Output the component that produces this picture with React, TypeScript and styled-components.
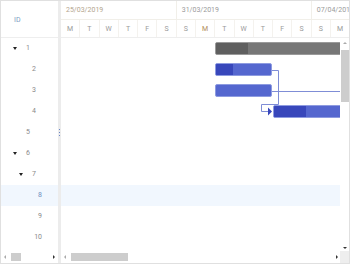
import React from 'react';
import styled, { createGlobalStyle } from 'styled-components';

const GlobalStyle = createGlobalStyle`
    html, body { margin: 0; padding: 0; background: #fff; }
    body { font-family: Roboto, 'Liberation Sans', sans-serif; }
`;

const DAY = 135 / 7;
const ROW = 21;

const Gantt = styled.div`
    width: 350px; height: 264px; box-sizing: border-box;
    border: 1px solid #e0e0e0;
    display: flex; font-size: 7px; color: #8a8a8a;
    overflow: hidden;
`;

const TreePanel = styled.div`
    width: 57px; display: flex; flex-direction: column; flex-shrink: 0;
`;

const TreeHeader = styled.div`
    height: 37px; box-sizing: border-box; border-bottom: 1px solid #eee;
    display: flex; align-items: center; padding-left: 13px; padding-top: 1px;
    color: #7d9cc2;
`;

const Rows = styled.div`
    flex: 1; overflow: hidden; position: relative;
`;

const TreeRow = styled.div<{ $level: number; $selected?: boolean }>`
    height: ${ROW}px; display: flex; align-items: center;
    padding-left: ${p => 12 + p.$level * 6}px;
    background: ${p => (p.$selected ? '#f1f7fe' : 'transparent')};
    color: ${p => (p.$selected ? '#6f8fbf' : '#8a8a8a')};
`;

const Toggle = styled.i`
    width: 5px; height: 6px; display: flex; align-items: center;
    &::before { content: ''; border-left: 2.5px solid transparent; border-right: 2.5px solid transparent; border-top: 3px solid #222; }
`;

const NoToggle = styled.i` width: 5px; `;

const Label = styled.span`
    width: 12px; text-align: right; line-height: 1;
`;

const HScroll = styled.div`
    height: 12px; display: flex; align-items: center; gap: 2px; padding: 0 3px;
    background: #fff; flex-shrink: 0;
`;

const Arrow = styled.i<{ $dir: 'left' | 'right' | 'up' | 'down'; $dark?: boolean }>`
    width: 0; height: 0; flex-shrink: 0;
    ${p => {
        const c = p.$dark ? '#333' : '#aaa';
        switch (p.$dir) {
            case 'left': return `border-top: 2px solid transparent; border-bottom: 2px solid transparent; border-right: 2px solid ${c};`;
            case 'right': return `border-top: 2px solid transparent; border-bottom: 2px solid transparent; border-left: 2px solid ${c};`;
            case 'up': return `border-left: 2px solid transparent; border-right: 2px solid transparent; border-bottom: 2px solid ${c};`;
            default: return `border-left: 2px solid transparent; border-right: 2px solid transparent; border-top: 2px solid ${c};`;
        }
    }}
`;

const Track = styled.div`
    flex: 1; height: 8px; position: relative;
`;

const Thumb = styled.div`
    position: absolute; top: 0; height: 8px; background: #cdcdcd;
`;

const Splitter = styled.div`
    width: 3px; background: #ececec; flex-shrink: 0;
    display: flex; align-items: center; justify-content: center;
    &::after { content: ''; width: 1px; height: 7px;
        background: repeating-linear-gradient(#6a86c8 0 1px, transparent 1px 3px); }
`;

const Timeline = styled.div`
    flex: 1; display: flex; flex-direction: column; min-width: 0;
`;

const TimeHeader = styled.div`
    height: 37px; box-sizing: border-box; border-bottom: 1px solid #eee;
    display: flex; flex-direction: column; overflow: hidden;
`;

const WeekRow = styled.div`
    height: 18px; display: flex; border-bottom: 1px solid #f1efe9; flex-shrink: 0;
`;

const WeekCell = styled.div<{ $days: number; $accent?: boolean }>`
    width: ${p => p.$days * DAY}px; flex-shrink: 0; box-sizing: border-box;
    border-right: 1px solid #f1efe9; padding-left: 5px;
    display: flex; align-items: center; white-space: nowrap; overflow: hidden;
    color: ${p => (p.$accent ? '#b3a58e' : '#9a9a9a')};
`;

const DayRow = styled.div`
    flex: 1; display: flex;
`;

const DayCell = styled.div<{ $accent?: boolean }>`
    width: ${DAY}px; flex-shrink: 0; box-sizing: border-box;
    border-right: 1px solid #f4f2ee;
    display: flex; align-items: center; justify-content: center;
    color: ${p => (p.$accent ? '#b08a5a' : '#9a9a9a')};
`;

const TimeBody = styled.div`
    flex: 1; display: flex; min-height: 0;
`;

const Chart = styled.div`
    flex: 1; position: relative; overflow: hidden;
`;

const ChartRow = styled.div<{ $selected?: boolean }>`
    height: ${ROW}px; position: relative;
    background: ${p => (p.$selected ? '#f1f7fe' : 'transparent')};
`;

const Bar = styled.div<{ $kind: 'project' | 'task' }>`
    position: absolute; top: 4px; height: 13px; box-sizing: border-box;
    border-radius: 2px; overflow: hidden;
    background: ${p => (p.$kind === 'project' ? '#777' : '#5567cf')};
    border: 1px solid ${p => (p.$kind === 'project' ? '#9a9a9a' : '#8e9be0')};
`;

const Progress = styled.div<{ $kind: 'project' | 'task' }>`
    height: 100%;
    background: ${p => (p.$kind === 'project' ? '#5f5f5f' : '#3847bb')};
`;

const Links = styled.svg`
    position: absolute; left: 0; top: 0; pointer-events: none;
`;

const VScroll = styled.div`
    width: 9px; flex-shrink: 0; display: flex; flex-direction: column;
    align-items: center; padding: 4px 0 2px;  box-sizing: border-box; gap: 3px;
`;

const VTrack = styled.div`
    flex: 1; width: 8px; position: relative;
`;

const VThumb = styled.div`
    position: absolute; left: 0; width: 8px; top: 0; height: 52px; background: #cdcdcd;
`;

const Corner = styled.div`
    width: 9px; height: 100%; background: #eee; margin-right: -3px;
`;

type Task = { id: number; level: number; toggle?: boolean; selected?: boolean; bar?: { kind: 'project' | 'task'; start: number; days: number; progress: number } };

const tasks: Task[] = [
    { id: 1, level: 0, toggle: true, bar: { kind: 'project', start: 8, days: 7, progress: 0.24 } },
    { id: 2, level: 1, bar: { kind: 'task', start: 8, days: 3, progress: 0.3 } },
    { id: 3, level: 1, bar: { kind: 'task', start: 8, days: 3, progress: 0 } },
    { id: 4, level: 1, bar: { kind: 'task', start: 11, days: 4, progress: 0.43 } },
    { id: 5, level: 0 },
    { id: 6, level: 0, toggle: true },
    { id: 7, level: 1, toggle: true },
    { id: 8, level: 2, selected: true },
    { id: 9, level: 2 },
    { id: 10, level: 2 },
];

const days = ['M', 'T', 'W', 'T', 'F', 'S', 'S', 'M', 'T', 'W', 'T', 'F', 'S', 'S', 'M'];

export default function App() {
    const x = (d: number) => Math.round(d * DAY);
    return (
        <>
            <GlobalStyle />
            <Gantt>
                <TreePanel>
                    <TreeHeader>ID</TreeHeader>
                    <Rows>
                        {tasks.map(t => (
                            <TreeRow key={t.id} $level={t.level} $selected={t.selected}>
                                {t.toggle ? <Toggle /> : <NoToggle />}
                                <Label>{t.id}</Label>
                            </TreeRow>
                        ))}
                    </Rows>
                    <HScroll>
                        <Arrow $dir="left" />
                        <Track><Thumb style={{ left: 3, width: 10 }} /></Track>
                        <Arrow $dir="right" $dark />
                    </HScroll>
                </TreePanel>
                <Splitter />
                <Timeline>
                    <TimeHeader>
                        <WeekRow>
                            <WeekCell $days={6} $accent>25/03/2019</WeekCell>
                            <WeekCell $days={7}>31/03/2019</WeekCell>
                            <WeekCell $days={7}>07/04/2019</WeekCell>
                        </WeekRow>
                        <DayRow>
                            {days.map((d, i) => (
                                <DayCell key={i} $accent={i === 7}>{d}</DayCell>
                            ))}
                        </DayRow>
                    </TimeHeader>
                    <TimeBody>
                        <Chart>
                            {tasks.map(t => (
                                <ChartRow key={t.id} $selected={t.selected}>
                                    {t.bar && (
                                        <Bar $kind={t.bar.kind} style={{ left: x(t.bar.start), width: x(t.bar.start + t.bar.days) - x(t.bar.start) - 1 }}>
                                            <Progress $kind={t.bar.kind} style={{ width: `${t.bar.progress * 100}%` }} />
                                        </Bar>
                                    )}
                                </ChartRow>
                            ))}
                            <Links width="279" height="130">
                                <g fill="none" stroke="#7f8dd6" strokeWidth="1">
                                    <path d="M211 32.5 H217.5 V66.5 H200.5 V73.5 H207" />
                                    <path d="M211 53.5 H279" />
                                </g>
                                <path d="M207 69.5 L211 73.5 L207 77.5 Z" fill="#3847bb" />
                            </Links>
                        </Chart>
                        <VScroll>
                            <Arrow $dir="up" />
                            <VTrack><VThumb style={{ top: 3 }} /></VTrack>
                            <Arrow $dir="down" $dark />
                        </VScroll>
                    </TimeBody>
                    <HScroll>
                        <Arrow $dir="left" />
                        <Track><Thumb style={{ left: 3, width: 57 }} /></Track>
                        <Arrow $dir="right" $dark />
                        <Corner />
                    </HScroll>
                </Timeline>
            </Gantt>
        </>
    );
}
